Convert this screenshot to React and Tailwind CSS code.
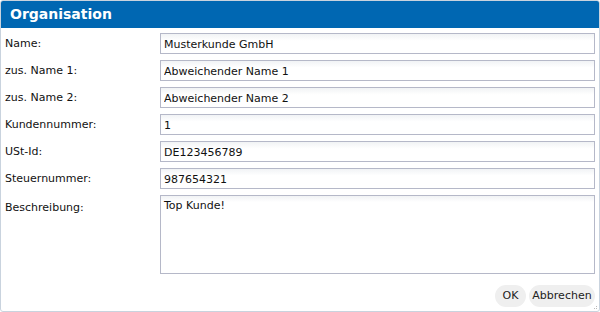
import React from "react";

const fields = [
  { label: "Name:", value: "Musterkunde GmbH" },
  { label: "zus. Name 1:", value: "Abweichender Name 1" },
  { label: "zus. Name 2:", value: "Abweichender Name 2" },
  { label: "Kundennummer:", value: "1" },
  { label: "USt-Id:", value: "DE123456789" },
  { label: "Steuernummer:", value: "987654321" },
];

export default function App() {
  return (
    <div
      className="relative flex h-[312px] w-[600px] flex-col overflow-hidden rounded-[3px] border border-[#c9d3de] bg-white text-[11px] text-[#111]"
      style={{ fontFamily: '"DejaVu Sans", Verdana, sans-serif' }}
    >
      <div className="flex h-[27px] shrink-0 items-center bg-[#0067b2] pl-[9px] text-[14px] font-bold text-white">
        Organisation
      </div>

      <div className="flex flex-col gap-[6px] pt-[5px]">
        {fields.map((f) => (
          <div key={f.label} className="flex h-[21px] items-center">
            <div className="w-[159px] shrink-0 pl-[4px] pt-[2px]">{f.label}</div>
            <input
              readOnly
              value={f.value}
              className="mr-[4px] h-[21px] flex-1 border border-[#b5b8c8] bg-gradient-to-b from-[#f1f3f5] to-white to-[35%] px-[3px] pt-[1px] text-[11px] text-[#111] outline-none"
              style={{ fontFamily: '"DejaVu Sans", Verdana, sans-serif' }}
            />
          </div>
        ))}
        <div className="flex items-start">
          <div className="w-[159px] shrink-0 pl-[4px] pt-[5px]">Beschreibung:</div>
          <textarea
            readOnly
            value="Top Kunde!"
            className="mr-[4px] h-[79px] flex-1 resize-none border border-[#b5b8c8] bg-gradient-to-b from-[#f1f3f5] to-white to-[8%] px-[3px] py-[2px] text-[11px] text-[#111] outline-none"
            style={{ fontFamily: '"DejaVu Sans", Verdana, sans-serif' }}
          />
        </div>
      </div>

      <div className="mt-[11px] flex justify-end gap-[3px] pr-[4px]">
        <button className="h-[22px] w-[31px] rounded-full bg-[#efefef] text-[11px] text-[#222]">
          OK
        </button>
        <button className="h-[22px] w-[66px] rounded-full bg-[#efefef] text-[11px] text-[#222]">
          Abbrechen
        </button>
      </div>

      <svg className="absolute bottom-[1px] right-[1px]" width="4" height="4" viewBox="0 0 4 4">
        <rect x="2" y="0" width="1" height="1" fill="#bbb" />
        <rect x="0" y="2" width="1" height="1" fill="#bbb" />
        <rect x="2" y="2" width="1" height="1" fill="#bbb" />
      </svg>
    </div>
  );
}
